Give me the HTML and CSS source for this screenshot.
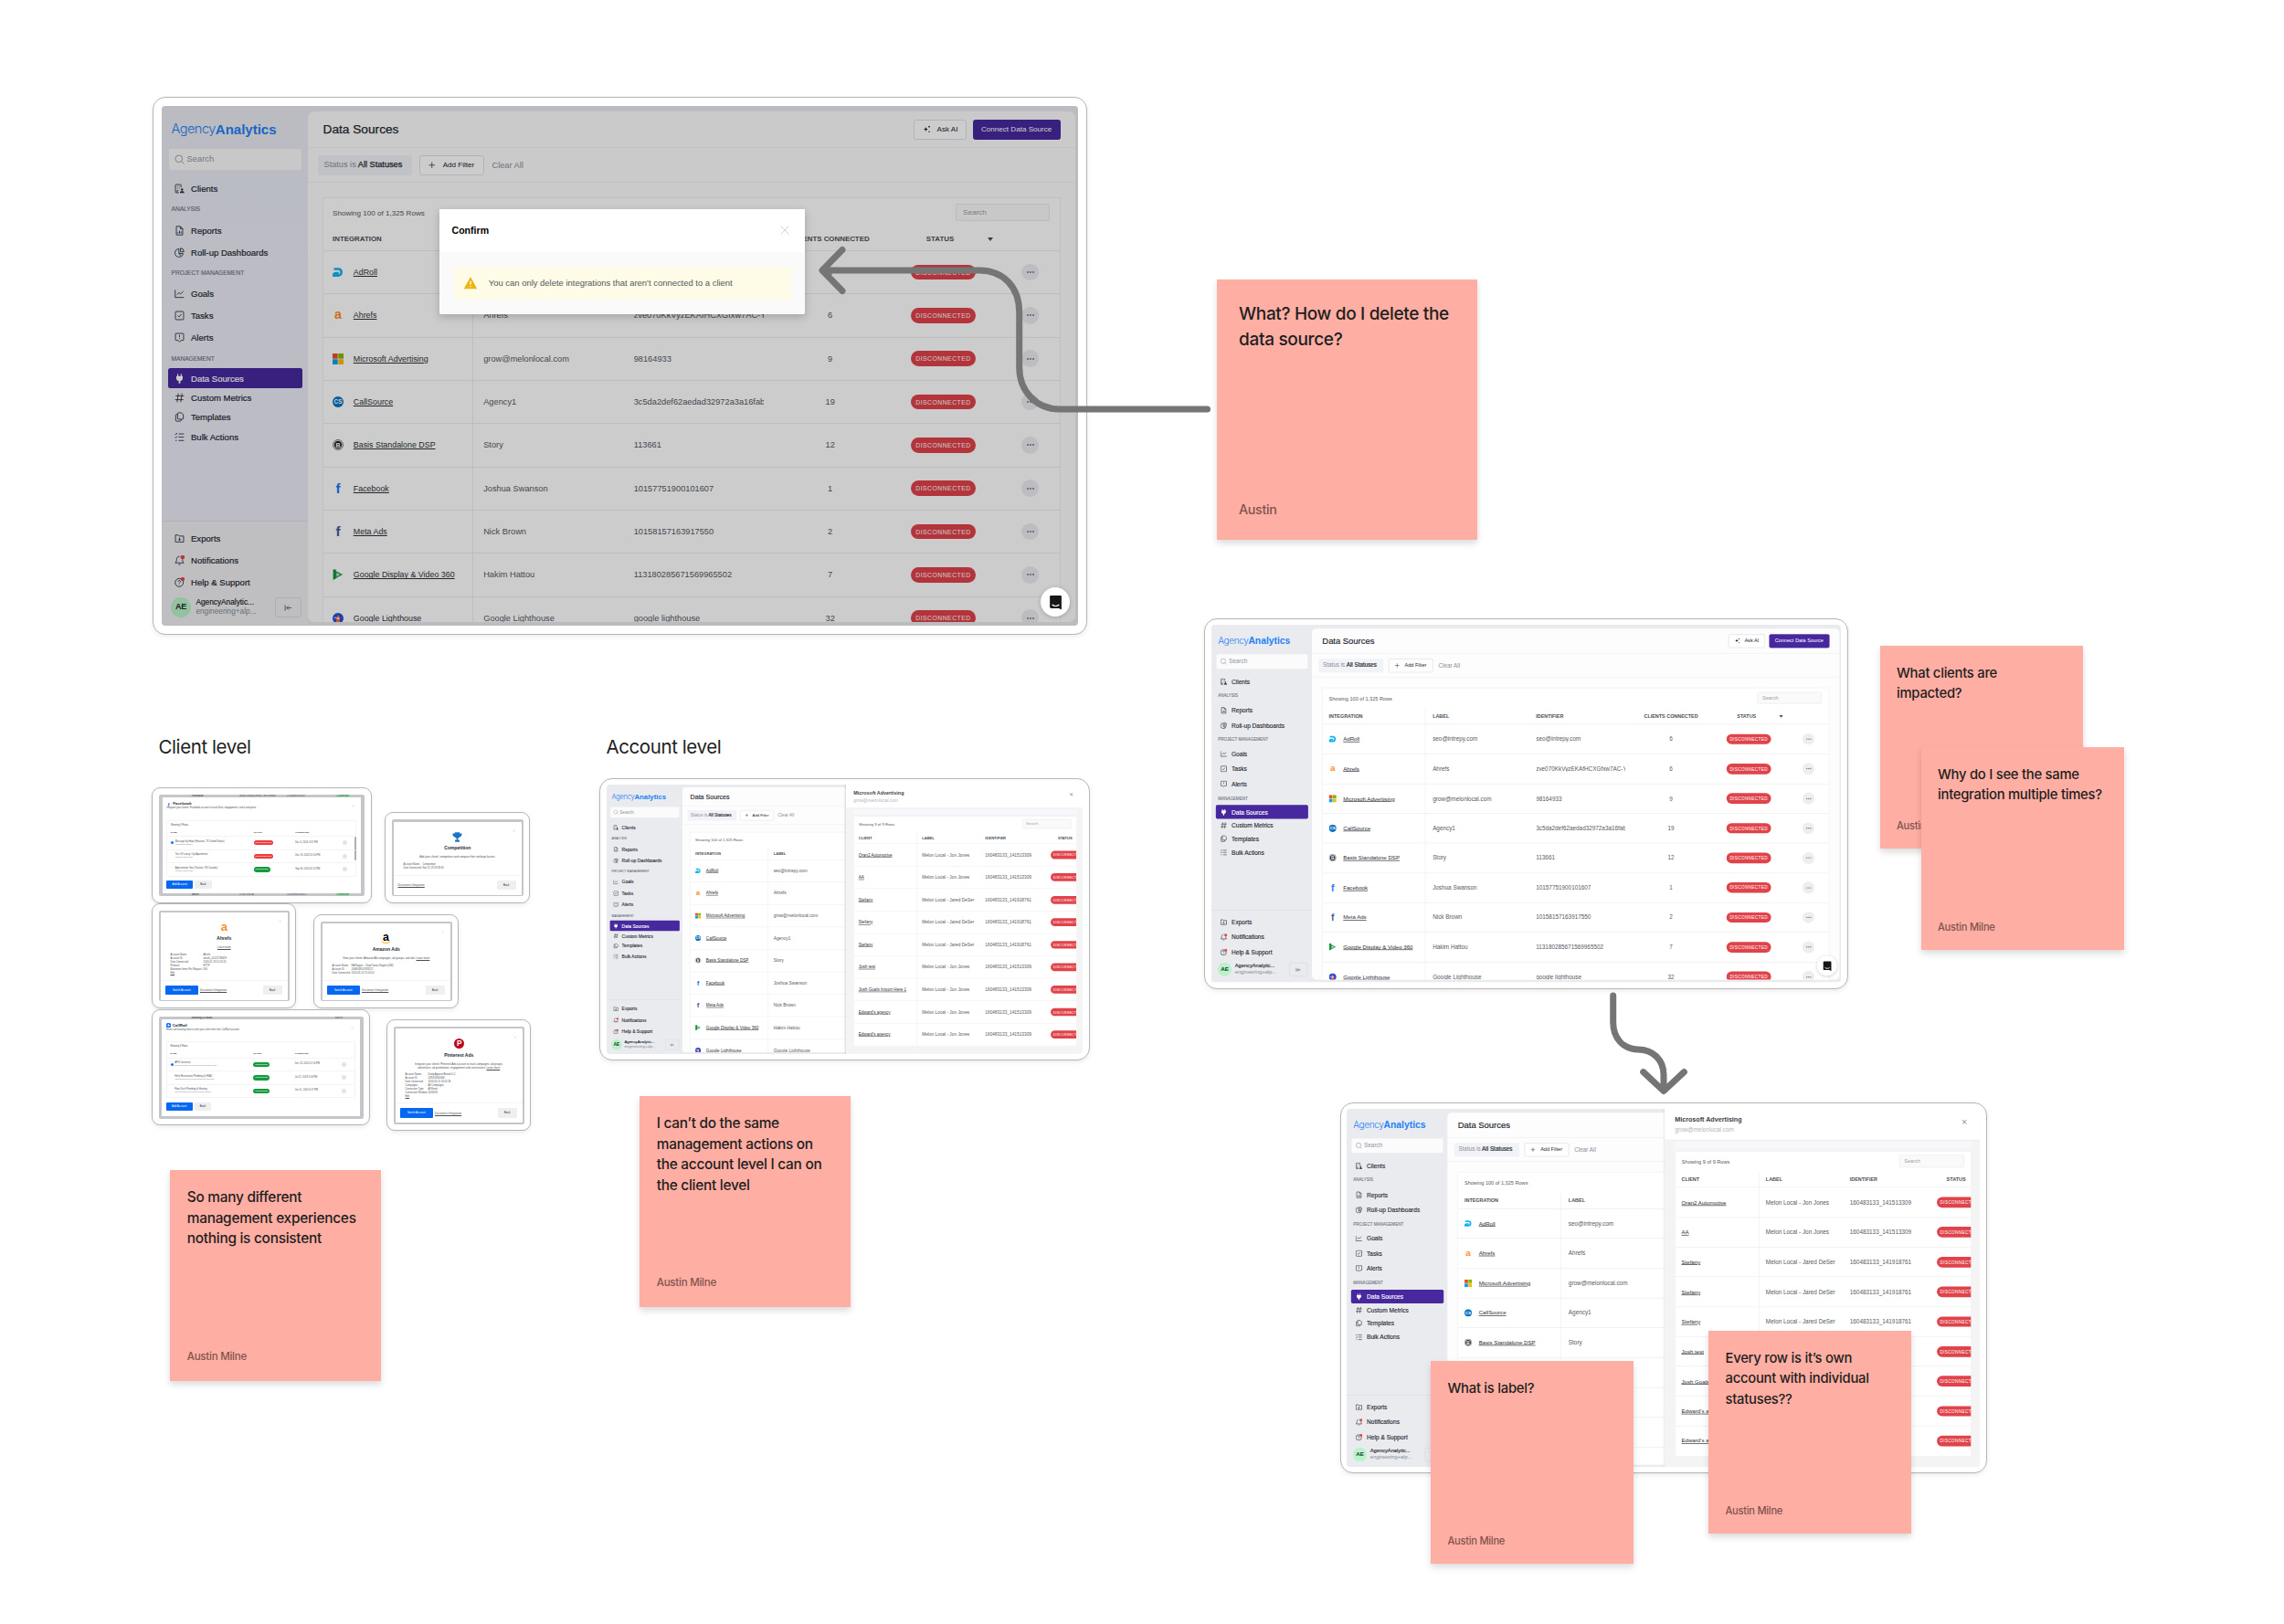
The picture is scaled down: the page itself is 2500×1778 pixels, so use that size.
FILE: index.html
```html
<!DOCTYPE html>
<html lang="en">
  <head>
    <meta charset="UTF-8" />
    <meta name="viewport" content="width=device-width, initial-scale=1.0" />
    <title>Data Sources Audit</title>
    <link rel="stylesheet" href="styles.css">
  </head>
  <body>
    <svg class="sprite" aria-hidden="true">
      <!-- navigation -->
      <symbol id="i-search" viewBox="0 0 16 16"><circle cx="7" cy="7" r="5.6" /><path d="M11.2 11.2 15 15" /></symbol>
      <symbol id="i-clients" viewBox="0 0 16 16"><path d="M7 14.5H2.5a1 1 0 0 1-1-1v-11a1 1 0 0 1 1-1h7a1 1 0 0 1 1 1V6M4.2 4.5h1M7 4.5h1M4.2 7.5h1M7 7.5h1M4.2 14v-3h2" /><circle class="solid" cx="12" cy="9.5" r="1.7" /><path class="solid" d="M8.6 15c0-2.4 1.4-3 3.4-3s3.6.6 3.6 3z" /></symbol>
      <symbol id="i-reports" viewBox="0 0 16 16"><path d="M3 1.2h6.5L13 4.8v10H3zM9.3 1.5V5H13M5.6 12.5v-2M8 12.5V8M10.4 12.5v-3" /></symbol>
      <symbol id="i-pie" viewBox="0 0 16 16"><path d="M7 2.2A6.4 6.4 0 1 0 13.6 9.5H7zM9.5 1A5.8 5.8 0 0 1 15 6.8H9.5zM7 9.5l4 4.3" /></symbol>
      <symbol id="i-goals" viewBox="0 0 16 16"><path d="M1 2v12h14M3.8 9.5 7 6.5l2.5 2 4.5-4" /></symbol>
      <symbol id="i-tasks" viewBox="0 0 16 16"><rect x="1.5" y="1.5" width="13" height="13" rx="1.5" /><path d="m5 8.2 2.2 2L11 5.5" /></symbol>
      <symbol id="i-alerts" viewBox="0 0 16 16"><path d="M2.5 1.5h11a1 1 0 0 1 1 1v9a1 1 0 0 1-1 1h-3L8 15l-2.5-2.5h-3a1 1 0 0 1-1-1v-9a1 1 0 0 1 1-1zM8 4v3.6M8 9.2v1.2" /></symbol>
      <symbol id="i-plug" viewBox="0 0 16 16"><path class="solid" d="M4.5.5h1.6V4h3.8V.5h1.6V4h1.6v3.5c0 2.3-1.6 3.8-3.8 4.2V15.5H6.7v-3.8c-2.2-.4-3.8-1.9-3.8-4.2V4h1.6z" /></symbol>
      <symbol id="i-hash" viewBox="0 0 16 16"><path d="M6.2 1 4 15M12 1 9.8 15M2 5h13M1 11h13" /></symbol>
      <symbol id="i-copy" viewBox="0 0 16 16"><path d="M6 1.3h5l3 3V10.5a1 1 0 0 1-1 1H6a1 1 0 0 1-1-1V2.3a1 1 0 0 1 1-1zM5 4H3a1 1 0 0 0-1 1v8.7a1 1 0 0 0 1 1h6.5a1 1 0 0 0 1-1v-2" /></symbol>
      <symbol id="i-bulk" viewBox="0 0 16 16"><path d="m.8 2.8 1.3 1.3L4.2 1.5M.8 8l1.3 1.3 2.1-2.6M1.5 13.5h2M6.5 3H15M6.5 8H15M6.5 13.5H15" /></symbol>
      <symbol id="i-exports" viewBox="0 0 16 16"><path d="M1.5 2.5H6l1.5 1.7h7v9.5h-13zM8 6.5v5M5.8 9.3 8 11.5l2.2-2.2" /></symbol>
      <symbol id="i-bell" viewBox="0 0 16 16"><path d="M8 1.8c-3 0-4.6 2-4.6 4.7 0 3-1 4.3-2.2 5.5h13.6c-1.2-1.2-2.2-2.5-2.2-5.5M6.3 14.2c.8 1 2.6 1 3.4 0" /><circle class="dot" cx="12.8" cy="3" r="3.4" /></symbol>
      <symbol id="i-help" viewBox="0 0 16 16"><circle cx="7.5" cy="8.5" r="6.5" /><path d="M5.6 6.8c.2-2.6 4-2.2 3.8.2-.2 1.4-1.9 1.3-1.9 2.8M7.5 11.3v1" /><circle class="dot" cx="13" cy="3" r="3.2" /></symbol>
      <symbol id="i-collapse" viewBox="0 0 16 16"><path d="M2 2.5v11M14.5 8H5.5M9 4 5 8l4 4" /></symbol>
      <symbol id="i-spark" viewBox="0 0 16 16"><path class="solid" d="M6 3c.7 3.5 1.5 4.3 5 5-3.5.7-4.3 1.5-5 5-.7-3.5-1.5-4.3-5-5 3.5-.7 4.3-1.5 5-5z" /><circle class="solid" cx="12.5" cy="3" r="1.6" /><circle class="solid" cx="12.5" cy="13" r="1.3" /></symbol>
      <symbol id="i-plus" viewBox="0 0 16 16"><path d="M8 1v14M1 8h14" /></symbol>
      <symbol id="i-close" viewBox="0 0 16 16"><path d="m1 1 14 14M15 1 1 15" /></symbol>
      <symbol id="i-warn" viewBox="0 0 16 16"><path d="M8 1.5 15.3 14.5H.7z" fill="#eeb211" stroke="#eeb211" stroke-linejoin="round" /><path d="M8 5.5v4.3M8 11.5v1.4" stroke="#fff" stroke-width="1.5" /></symbol>
      <symbol id="i-chat" viewBox="0 0 16 16"><path class="solid" d="M3.2 1h9.6c.7 0 1.2.5 1.2 1.2V15.5l-2.6-1.5H3.2A1.2 1.2 0 0 1 2 12.8V2.2C2 1.5 2.5 1 3.2 1z" /><path d="M4.4 10.3c2 1.7 5.2 1.7 7.2 0" stroke="#fff" /></symbol>

      <!-- integrations -->
      <symbol id="l-adroll" viewBox="0 0 16 16"><path d="M2 3.2H9a4.9 4.9 0 0 1 0 9.6H1.500C1.500 10.500 3 9.200 5 9.200H9" fill="none" stroke="#14b4f0" stroke-width="3.4" /></symbol>
      <symbol id="l-ahrefs" viewBox="0 0 16 16"><text x="8" y="13.5" font-size="19" fill="#ff8b1f">a</text></symbol>
      <symbol id="l-microsoft" viewBox="0 0 16 16"><path fill="#f25022" d="M0 0h7.6v7.6H0z" /><path fill="#7fba00" d="M8.4 0H16v7.6H8.4z" /><path fill="#00a4ef" d="M0 8.4h7.6V16H0z" /><path fill="#ffb900" d="M8.4 8.4H16V16H8.4z" /></symbol>
      <symbol id="l-callsource" viewBox="0 0 16 16"><circle cx="8" cy="8" r="8" fill="#0b74c4" /><text x="8" y="11" font-size="8.5" fill="#fff">CS</text></symbol>
      <symbol id="l-basis" viewBox="0 0 16 16"><circle cx="8" cy="8" r="7.3" fill="none" stroke="#444" stroke-width="1" /><circle cx="8" cy="8" r="5.6" fill="#222" /><text x="8" y="11.4" font-size="9.5" fill="#fff">B</text></symbol>
      <symbol id="l-facebook" viewBox="0 0 16 16"><text x="8" y="15" font-size="20" fill="#1777f2">f</text></symbol>
      <symbol id="l-meta" viewBox="0 0 16 16"><text x="8" y="15" font-size="20" fill="#3b5998">f</text></symbol>
      <symbol id="l-dv360" viewBox="0 0 16 16"><path fill="#34a853" d="M1 .5 15 8 1 15.5z" /><path fill="#1e8e3e" d="M1 .5h4v13L1 15.5z" /><path fill="#d9f2df" d="M6 5.5 10.5 8 6 10.5z" /></symbol>
      <symbol id="l-lighthouse" viewBox="0 0 16 16"><circle cx="8" cy="8" r="8" fill="#2b4fd8" /><path fill="#ff6d3b" d="M5 16 6 6l2-3 2 3 1 10z" /><path fill="#fff" d="M6 7h4v2H6zM1.5 7 5 6v2z" /></symbol>
      <symbol id="l-trophy" viewBox="0 0 16 16"><path fill="#1f74c4" d="M4 .5h8V2h3.5c0 3.5-1.5 5.5-4 6-.7 1.2-1.5 1.7-2.5 2v2.5h2.5V15.5h-7V12.5H7V10c-1-.3-1.8-.8-2.5-2-2.5-.5-4-2.500-4-6H4z" /></symbol>
      <symbol id="l-amazon" viewBox="0 0 16 16"><text x="8" y="11.5" font-size="18" fill="#000">a</text><path d="M1 12.5c4 3.4 10 3.4 13.5.3" fill="none" stroke="#ff9900" stroke-width="1.4" /></symbol>
      <symbol id="l-callrail" viewBox="0 0 16 16"><rect width="16" height="16" rx="5" fill="#0f6fff" /><path d="M8 3v10M3 8h10" stroke="#fff" stroke-width="2" /></symbol>
      <symbol id="l-pinterest" viewBox="0 0 16 16"><circle cx="8" cy="8" r="8" fill="#bd081c" /><text x="8.2" y="12.3" font-size="12" fill="#fff">P</text></symbol>
    </svg>

    <main class="board">
      <h2 class="board-title title-client">Client level</h2>
      <h2 class="board-title title-account">Account level</h2>

      <section class="frame frame-confirm"><div class="screen" data-app="confirm"></div></section>
      <section class="frame frame-list"><div class="screen" data-app="list"></div></section>
      <section class="frame frame-account"><div class="screen" data-app="panel"></div></section>
      <section class="frame frame-detail"><div class="screen" data-app="panel"></div></section>

      <section class="frame small card-facebook"><div class="screen" data-list="facebook"></div></section>
      <section class="frame small card-competition"><div class="screen" data-card="competition"></div></section>
      <section class="frame small card-ahrefs"><div class="screen" data-card="ahrefs"></div></section>
      <section class="frame small card-amazon"><div class="screen" data-card="amazon"></div></section>
      <section class="frame small card-callrail"><div class="screen" data-list="callrail"></div></section>
      <section class="frame small card-pinterest"><div class="screen" data-card="pinterest"></div></section>

      <svg class="arrows" viewBox="0 0 2500 1778">
        <path d="M1321.5 448H1160C1134 448 1115.7 428 1115.7 402V342C1115.7 314 1098 296 1072 296H901M922 273.5 900 296 922 318.5" />
        <path d="M1765.7 1090V1119C1765.7 1137 1777 1149 1793 1149C1809 1149 1821 1160 1821 1177V1193M1798.7 1173.6 1821 1194.5 1843.4 1173.6" />
      </svg>

      <article class="note note-delete"><p>What? How do I delete the data source?</p><footer>Austin</footer></article>
      <article class="note note-clients"><p>What clients are<br>impacted?</p><footer>Austin Milne</footer></article>
      <article class="note note-multiple"><p>Why do I see the same integration multiple times?</p><footer>Austin Milne</footer></article>
      <article class="note medium note-consistent"><p>So many different management experiences nothing is consistent</p><footer>Austin Milne</footer></article>
      <article class="note medium note-actions"><p>I can’t do the same management actions on the account level I can on the client level</p><footer>Austin Milne</footer></article>
      <article class="note note-label"><p>What is label?</p><footer>Austin Milne</footer></article>
      <article class="note note-row"><p>Every row is it’s own account with individual statuses??</p><footer>Austin Milne</footer></article>
    </main>

    <script>
      const icon = (id, cls = "icon") => `<svg class="${cls}"><use href="#${id}"></use></svg>`;

      const integrations = [
        ["adroll", "AdRoll", "seo@intrepy.com", "seo@intrepy.com", 6],
        ["ahrefs", "Ahrefs", "Ahrefs", "zve070KkVyzEKAfHCXGfxw7AC-Y", 6],
        ["microsoft", "Microsoft Advertising", "grow@melonlocal.com", "98164933", 9],
        ["callsource", "CallSource", "Agency1", "3c5da2def62aedad32972a3a16fab", 19],
        ["basis", "Basis Standalone DSP", "Story", "113661", 12],
        ["facebook", "Facebook", "Joshua Swanson", "10157751900101607", 1],
        ["meta", "Meta Ads", "Nick Brown", "10158157163917550", 2],
        ["dv360", "Google Display &amp; Video 360", "Hakim Hattou", "113180285671569965502", 7],
        ["lighthouse", "Google Lighthouse", "Google Lighthouse", "google lighthouse", 32],
      ];

      const clients = [
        ["Oran2 Automotive", "Melon Local - Jon Jones", "160483133_141513309"],
        ["AA", "Melon Local - Jon Jones", "160483133_141513309"],
        ["Stefany", "Melon Local - Jared DeSer", "160483133_141918761"],
        ["Stefany", "Melon Local - Jared DeSer", "160483133_141918761"],
        ["Stefany", "Melon Local - Jared DeSer", "160483133_141918761"],
        ["Josh test", "Melon Local - Jon Jones", "160483133_141513309"],
        ["Josh Goals Import Here 1", "Melon Local - Jon Jones", "160483133_141513309"],
        ["Edward's agency", "Melon Local - Jon Jones", "160483133_141513309"],
        ["Edward's agency", "Melon Local - Jon Jones", "160483133_141513309"],
      ];

      const nav = (id, text, cls = "") => `<a class="nav-item ${cls}">${icon(id)}${text}</a>`;

      const sidebar = `
        <aside class="sidebar">
          <div class="logo"><span>Agency</span><b>Analytics</b></div>
          <div class="side-search">${icon("i-search")}Search</div>
          ${nav("i-clients", "Clients")}
          <h6>ANALYSIS</h6>
          ${nav("i-reports", "Reports")}${nav("i-pie", "Roll-up Dashboards")}
          <h6>PROJECT MANAGEMENT</h6>
          ${nav("i-goals", "Goals")}${nav("i-tasks", "Tasks")}${nav("i-alerts", "Alerts")}
          <h6>MANAGEMENT</h6>
          ${nav("i-plug", "Data Sources", "tight active")}${nav("i-hash", "Custom Metrics", "tight")}
          ${nav("i-copy", "Templates", "tight")}${nav("i-bulk", "Bulk Actions", "tight")}
          <div class="side-footer">
            ${nav("i-exports", "Exports")}${nav("i-bell", "Notifications")}${nav("i-help", "Help &amp; Support")}
            <div class="user">
              <div class="avatar">AE</div>
              <div class="user-text"><b>AgencyAnalytic...</b><span>engineering+alp...</span></div>
              <div class="collapse">${icon("i-collapse")}</div>
            </div>
          </div>
        </aside>`;

      const mainRows = integrations.map(([logo, name, label, id, count]) => `
        <div class="row">
          <div class="cell name">${icon("l-" + logo, "logo-icon")}<u>${name}</u></div>
          <div class="cell">${label}</div>
          <div class="cell"><span class="clip">${id}</span></div>
          <div class="cell center">${count}</div>
          <div class="cell center"><span class="pill">DISCONNECTED</span></div>
          <div class="cell center"><span class="more"><i></i><i></i><i></i></span></div>
        </div>`).join("");

      const mainPane = `
        <div class="pane">
          <header class="pane-header">
            <h1>Data Sources</h1>
            <div class="btn ask">${icon("i-spark")}Ask AI</div>
            <div class="btn primary">Connect Data Source</div>
          </header>
          <div class="filters">
            <div class="chip">Status is <b>All Statuses</b></div>
            <div class="btn">${icon("i-plus")}Add Filter</div>
            <span>Clear All</span>
          </div>
          <div class="table">
            <div class="table-top">Showing 100 of 1,325 Rows<div class="table-search">Search</div></div>
            <div class="row head">
              <div class="cell">INTEGRATION</div><div class="cell">LABEL</div><div class="cell">IDENTIFIER</div>
              <div class="cell center">CLIENTS CONNECTED</div>
              <div class="cell sort">STATUS<i class="caret"></i></div><div class="cell"></div>
            </div>
            ${mainRows}
          </div>
        </div>`;

      const panel = `
        <div class="panel">
          <header><h3>Microsoft Advertising</h3><span>grow@melonlocal.com</span>${icon("i-close")}</header>
          <div class="band"></div>
          <div class="table">
            <div class="table-top">Showing 9 of 9 Rows<div class="table-search">Search</div></div>
            <div class="row head">
              <div class="cell">CLIENT</div><div class="cell">LABEL</div><div class="cell">IDENTIFIER</div><div class="cell">STATUS</div>
            </div>
            ${clients.map(([name, label, id]) => `
              <div class="row">
                <div class="cell"><u>${name}</u></div><div class="cell">${label}</div><div class="cell">${id}</div>
                <div class="cell"><span class="pill">DISCONNECTED</span></div>
              </div>`).join("")}
          </div>
        </div>`;

      const confirmModal = `
        <div class="overlay"></div>
        <div class="modal">
          <header>Confirm${icon("i-close")}</header>
          <div class="modal-body"><div class="warning">${icon("i-warn")}You can only delete integrations that aren't connected to a client</div></div>
        </div>`;

      const chat = `<div class="chat">${icon("i-chat")}</div>`;

      document.querySelectorAll("[data-app]").forEach((el) => {
        const type = el.dataset.app;
        el.innerHTML = `<div class="app app-${type}">${sidebar}${mainPane}${
          type === "panel" ? panel : type === "confirm" ? confirmModal + chat : chat
        }</div>`;
      });

      // integration dialogs with a list of accounts
      const lists = {
        facebook: {
          title: "Facebook",
          text: "Integrate your clients' Facebook account to track likes, engagement, reach and posts.",
          behind: ["Facebook", "Grow Locally Dental - HR Growth", "1234838292839", "Mailer", "22302 8GCA", "1c2a9f3d7a2e4c1"],
          rows: [
            ["Massage by Hope (Houston, TX United States)", "103938239028201", "DISCONNECTED", "Dec 3, 2024 4:52 PM"],
            ["Test Of Luxury City Apartments", "102291920171038", "DISCONNECTED", "Dec 19, 2024 10:16 PM"],
            ["Approximate Geo (Toronto, ON Canada)", "101839420184738", "CONNECTED", "Sep 30, 2024 01:11 PM"],
          ],
        },
        callrail: {
          title: "CallRail",
          text: "Share call tracking metrics with your client from their CallRail account.",
          behind: ["Showing 31 Rows", "", ""],
          rows: [
            ["APG Converse", "229fa0c8ca8e4504cb9ff9fa07c0ed5be06f080", "CONNECTED", "Dec 18, 2024 12:14 PM"],
            ["Helix Restoration Plumbing &amp; HVAC", "129ba3cdbee1c0ea0f7908364ba09ba05ce", "CONNECTED", "Jul 21, 2023 5:03 PM"],
            ["Flow-Tech Plumbing &amp; Heating", "1c0dea0b2a0aef4f0f58e90a7de7cadaf", "CONNECTED", "Jan 11, 2024 6:17 PM"],
          ],
        },
      };

      document.querySelectorAll("[data-list]").forEach((el) => {
        const d = lists[el.dataset.list];
        const strip = (t) => `<div class="behind"><b>${t[0]}</b><span>${t[1]}</span><span>${t[2]}</span>${t[1] ? "<em>Connected</em>" : "<span>Search</span>"}</div>`;
        el.innerHTML = `${strip(d.behind)}
          <div class="dialog list">
            ${icon("i-close", "x")}
            <h4>${icon("l-" + el.dataset.list, "logo-icon")}${d.title}</h4>
            <p>${d.text}</p>
            <div class="mini">
              <div class="mini-top">Showing 3 Rows</div>
              <div class="mini-row mini-head"><b>NAME</b><b>STATUS</b><b>CONNECTED</b></div>
              ${d.rows.map(([name, id, status, date], i) => `
                <div class="mini-row">
                  <div class="acct ${i ? "" : "on"}">${name}<small>${id}</small></div>
                  <span class="tag ${status.toLowerCase()}">${status}</span><span>${date}</span><i class="knob"></i>
                </div>`).join("")}
            </div>
            <div class="dialog-actions"><span class="b blue">Add Account</span><span class="b">Back</span></div>
          </div>
          ${d.behind[3] ? strip(d.behind.slice(3)) : '<div class="behind"></div>'}`;
      });

      // single account dialogs
      const cards = {
        competition: {
          title: "Competition", logo: "trophy",
          text: "Add your clients' competitors and compare their rankings factors.",
          details: [["Account Name", "Competition"], ["Date Connected", "Nov 11 19 23:58:45"]],
        },
        ahrefs: {
          title: "Ahrefs", logo: "ahrefs", button: true, text: "<u>Learn more</u>",
          details: [["Account Name", "Ahrefs"], ["Account ID", "ahrefs_02122738429"], ["Date Connected", "2024-01-23 01:25:05"], ["Protocol", "HTTP"], ["Maximum Items Per Request", "500"], ["<u>Edit</u>", ""]],
        },
        amazon: {
          title: "Amazon Ads", logo: "amazon", button: true,
          text: "View your clients' Amazon Ad campaigns, ad groups, and ads. <u>Learn more</u>",
          details: [["Account Name", "NA Region - Chad Toews Nagels (DM)"], ["Account ID", "1068508101933217"], ["Date Connected", "2024-03-14 15:24:02"]],
        },
        pinterest: {
          title: "Pinterest Ads", logo: "pinterest", button: true,
          text: "Integrate your clients' Pinterest Ads account to track campaigns, ad groups, advertisers, ad promotions, engagement and conversions. <u>Learn more</u>",
          details: [["Account Name", "Dixby Apparel Brand LLC"], ["Account ID", "549020900468"], ["Date Connected", "2024-03-11 20:02:28"], ["Campaigns", "All Campaigns"], ["Conversion Type", "All Event"], ["Conversion Window", "30/30/30"], ["<u>Edit</u>", ""]],
        },
      };

      document.querySelectorAll("[data-card]").forEach((el) => {
        const d = cards[el.dataset.card];
        el.innerHTML = `
          <div class="dialog single">
            ${icon("i-close", "x")}
            ${icon("l-" + d.logo, "logo-icon")}
            <h4>${d.title}</h4>
            <p>${d.text}</p>
            <dl>${d.details.map(([k, v]) => `<dt>${k}</dt><dd>${v}</dd>`).join("")}</dl>
            <div class="dialog-footer">${d.button ? '<span class="b blue">Switch Account</span>' : ""}<u>Disconnect Integration</u><span class="b">Back</span></div>
          </div>`;
      });
    </script>
  </body>
</html>
```

FILE: styles.css
```css
* {
  box-sizing: border-box;
}
body {
  margin: 0;
  background: #fff;
  font-family: "Liberation Sans", Arial, sans-serif;
  color: #1e1e1e;
}
h1,
h2,
h3,
h4,
h6,
p,
dl,
dd {
  margin: 0;
}
.sprite {
  display: none;
}
svg {
  flex: none;
  overflow: visible;
}
.icon,
.x {
  width: 11px;
  height: 11px;
  fill: none;
  stroke: currentColor;
  stroke-width: 1.2;
}
.solid {
  fill: currentColor;
  stroke: none;
}
.dot {
  fill: #e5484d;
  stroke: none;
}
symbol text {
  font-family: "Liberation Sans", Arial, sans-serif;
  font-weight: bold;
  text-anchor: middle;
}

/* canvas */
.board {
  position: relative;
  width: 2500px;
  height: 1778px;
  overflow: hidden;
}
.board-title {
  position: absolute;
  top: 805px;
  font: 400 20.5px/26px Inter, sans-serif;
  letter-spacing: -0.02em;
  white-space: nowrap;
}
.title-client {
  left: 173.5px;
}
.title-account {
  left: 663.5px;
}
.arrows {
  position: absolute;
  inset: 0;
  width: 2500px;
  height: 1778px;
  fill: none;
  stroke: #757575;
  stroke-width: 7;
  stroke-linecap: round;
  stroke-linejoin: round;
}
.frame {
  position: absolute;
  background: #fff;
  border: 1px solid #b5b5b5;
  border-radius: 14px;
  box-shadow: 0 2px 5px rgba(0, 0, 0, 0.08);
}
.screen {
  position: relative;
  width: 100%;
  height: 100%;
  overflow: hidden;
  border-radius: 4px;
}
.frame-confirm {
  --scale: 1;
  left: 167px;
  top: 106px;
  width: 1023px;
  height: 589px;
  padding: 9px;
}
.frame-list {
  --scale: 0.6875;
  left: 1318px;
  top: 677px;
  width: 705px;
  height: 406px;
  padding: 6px 7px;
}
.frame-account {
  --scale: 0.5187;
  left: 656px;
  top: 852px;
  width: 537px;
  height: 309px;
  padding: 6px 7px;
}
.frame-detail {
  --scale: 0.6895;
  left: 1467px;
  top: 1207px;
  width: 708px;
  height: 406px;
  padding: 6px;
}

/* app */
.app {
  position: relative;
  display: flex;
  width: 1005px;
  height: 569px;
  background: #e9ebef;
  color: #3c4148;
  font-size: 9.25px;
  transform: scale(var(--scale));
  transform-origin: 0 0;
}
.app-confirm {
  width: 1003px;
}
.sidebar {
  display: flex;
  flex-direction: column;
  width: 160px;
  height: 568px;
  flex: none;
  color: #23272f;
}
.app-confirm .sidebar {
  background: linear-gradient(#e9ebf3, #ebebf8 450px, #efeff3 455px);
}
.logo {
  display: flex;
  align-items: center;
  height: 30px;
  margin: 10px 0 7px 10.5px;
  color: #1f80f5;
  line-height: 1;
}
.logo span {
  font-family: Inter, sans-serif;
  font-weight: 300;
  font-size: 14.6px;
  letter-spacing: -0.55px;
}
.logo b {
  font-size: 15px;
}
.side-search {
  display: flex;
  align-items: center;
  gap: 3px;
  width: 145.5px;
  height: 22.8px;
  margin: 0 0 8.6px 7.6px;
  padding-left: 6px;
  border-radius: 2px;
  background: #fbfbfc;
  color: #8f939d;
  font-size: 9.3px;
}
.nav-item {
  display: flex;
  align-items: center;
  gap: 7.5px;
  width: 147px;
  height: 24px;
  margin-left: 6.5px;
  padding-left: 7px;
  border-radius: 2.5px;
  font-size: 9.55px;
  white-space: nowrap;
  -webkit-text-stroke: 0.18px;
}
.tight {
  height: 21.35px;
}
.active {
  background: #47289f;
  color: #fff;
}
.sidebar h6 {
  height: 22.2px;
  padding-left: 10.5px;
  font-size: 6.6px;
  font-weight: 400;
  line-height: 22px;
  color: #6b717c;
  -webkit-text-stroke: 0.12px;
}
.sidebar h6 + .nav-item {
  margin-top: -0.5px;
}
.side-footer {
  margin-top: auto;
  height: 114px;
  padding-top: 6.5px;
  border-top: 1px solid #dcdee4;
}
.user {
  display: flex;
  align-items: center;
  height: 31px;
  padding-left: 10.4px;
}
.avatar {
  width: 21.5px;
  height: 21.5px;
  border-radius: 50%;
  background: #b9f3c9;
  font-size: 9px;
  font-weight: bold;
  line-height: 21.5px;
  text-align: center;
}
.user-text {
  display: flex;
  flex-direction: column;
  width: 87px;
  margin-left: 5.5px;
  font-size: 8.3px;
  line-height: 9.8px;
}
.user-text b {
  font-weight: 400;
  -webkit-text-stroke: 0.18px;
}
.user-text span {
  color: #858a95;
}
.collapse {
  display: flex;
  align-items: center;
  justify-content: center;
  width: 29px;
  height: 21.5px;
  border: 1px solid #d8dae0;
  border-radius: 3px;
}
.collapse .icon {
  width: 9px;
  height: 9px;
}
.pane {
  width: 840px;
  height: 558.4px;
  margin-top: 6.4px;
  overflow: hidden;
  border-radius: 7px;
  background: #fdfdfe;
}
.pane-header {
  display: flex;
  align-items: center;
  gap: 7px;
  height: 39.8px;
  padding: 0 16.5px;
  border-bottom: 1px solid #f0f0f3;
}
h1 {
  margin-right: auto;
  font-size: 13.7px;
  font-weight: 400;
  color: #23272f;
  -webkit-text-stroke: 0.25px;
}
.btn {
  display: flex;
  align-items: center;
  justify-content: center;
  gap: 8px;
  width: 70.5px;
  height: 21.8px;
  border: 1px solid #dfe0e4;
  border-radius: 2.5px;
  background: #fff;
  color: #23272f;
  font-size: 8.1px;
  white-space: nowrap;
}
.btn .icon {
  width: 7.5px;
  height: 7.5px;
  stroke-width: 1.5;
}
.btn.ask {
  width: 57.5px;
  gap: 7px;
}
.btn.ask .icon {
  width: 9px;
  height: 9px;
}
.btn.primary {
  width: 95.7px;
  border-color: #47289f;
  background: #47289f;
  color: #fff;
}
.filters {
  display: flex;
  align-items: center;
  gap: 8px;
  height: 38.3px;
  padding-left: 11px;
  border-bottom: 1px solid #f0f0f3;
  color: #8a8f9a;
  font-size: 9.2px;
}
.filters > span {
  margin-left: 1px;
}
.chip {
  width: 103px;
  height: 21.7px;
  padding-left: 6.5px;
  border-radius: 2.5px;
  background: #f2f3f7;
  line-height: 21.7px;
  white-space: nowrap;
}
.chip b {
  font-weight: 400;
  color: #23272f;
  -webkit-text-stroke: 0.25px;
}
.table {
  width: 808px;
  margin: 16px 0 0 16px;
  border: 1px solid #f0f0f3;
  background: #fff;
}
.table-top {
  display: flex;
  align-items: center;
  justify-content: space-between;
  height: 32.2px;
  padding: 0 11px 0 10px;
  font-size: 8.1px;
  color: #555a62;
}
.table-search {
  width: 103.5px;
  height: 19.6px;
  padding-left: 7.5px;
  margin-top: -2px;
  border: 1px solid #e9eaed;
  border-radius: 2px;
  background: #fafafb;
  color: #9a9da5;
  line-height: 18px;
}
.row {
  display: grid;
  grid-template-columns: 163.5px 164.5px 166px 121.4px 126.2px 1fr;
  height: 47.35px;
  border-top: 1px solid #ededf0;
  color: #565a61;
}
.row.head {
  height: 24.2px;
  border-top: 0;
  font-size: 7.9px;
  font-weight: bold;
  color: #4b4f57;
}
.cell {
  display: flex;
  align-items: center;
  padding-left: 11.7px;
  white-space: nowrap;
}
.cell:first-child {
  padding-left: 10px;
  border-right: 1px solid #ededf0;
}
.cell.center {
  justify-content: center;
  padding-left: 0;
}
.cell.sort {
  gap: 36.5px;
  padding-left: 44.4px;
}
.caret {
  border: 3px solid transparent;
  border-top: 4.5px solid currentColor;
  border-bottom: 0;
}
.cell u {
  color: #2d3138;
  text-decoration-thickness: 0.7px;
  text-underline-offset: 1px;
  font-size: 8.9px;
}
.logo-icon {
  width: 12px;
  height: 12px;
}
.name {
  gap: 10.8px;
}
.clip {
  width: 142.5px;
  overflow: hidden;
}
.pill {
  flex: none;
  width: 70.3px;
  height: 16.8px;
  border-radius: 8.4px;
  background: #e0434a;
  color: #fff;
  font-size: 6.8px;
  letter-spacing: 0.5px;
  line-height: 17px;
  text-align: center;
}
.more {
  display: flex;
  align-items: center;
  justify-content: center;
  gap: 1px;
  width: 18.6px;
  height: 18.6px;
  border-radius: 50%;
  background: #ededf2;
}
.more i {
  width: 2px;
  height: 2px;
  border-radius: 50%;
  background: #70747e;
}
.chat {
  position: absolute;
  right: 9px;
  bottom: 10px;
  display: flex;
  align-items: center;
  justify-content: center;
  width: 32px;
  height: 32px;
  border-radius: 50%;
  background: #fff;
  box-shadow: 0 1px 5px rgba(0, 0, 0, 0.2);
  color: #14161a;
}
.chat .icon {
  width: 17px;
  height: 17px;
}

/* side panel over the list */
.panel {
  position: absolute;
  top: 0;
  right: 0;
  width: 500.5px;
  height: 569px;
  background: #f4f4f5;
  box-shadow: -1px 0 4px rgba(0, 0, 0, 0.18);
}
.panel header {
  position: relative;
  height: 50px;
  padding: 10px 0 0 16.5px;
  border-bottom: 1px solid #e9eaec;
  background: #fff;
}
.panel h3 {
  font-size: 10.4px;
  line-height: 15px;
}
.panel header span {
  display: block;
  line-height: 16px;
  color: #b4b6bb;
}
.panel header .icon {
  position: absolute;
  right: 21px;
  top: 17px;
  width: 7.5px;
  height: 7.5px;
  stroke-width: 2;
}
.band {
  width: 471px;
  height: 11px;
  margin: 2px 0 4px 16.5px;
  background: #f7f8fb;
}
.panel .table {
  width: 471px;
  height: 485px;
  margin: 0 0 0 16.5px;
  overflow: hidden;
}
.panel .row {
  grid-template-columns: 132.7px 133.3px 138.3px 80px;
}
.panel .row .cell {
  padding-left: 10.8px;
}
.panel .row .cell:first-child {
  padding-left: 9.5px;
}
.panel .row.head .cell:last-child {
  padding-left: 26px;
}

/* confirm dialog */
.overlay {
  position: absolute;
  inset: 0;
  background: rgba(0, 0, 0, 0.2);
}
.modal {
  position: absolute;
  left: 303.5px;
  top: 112.7px;
  width: 400.5px;
  height: 115px;
  border-radius: 2px;
  background: #fafafa;
  box-shadow: 0 3px 10px rgba(0, 0, 0, 0.2);
}
.modal header {
  display: flex;
  align-items: center;
  justify-content: space-between;
  height: 47px;
  padding: 0 17px 0 14px;
  background: #fff;
  color: #000;
  font-size: 10.6px;
  font-weight: bold;
}
.modal header .icon {
  width: 10px;
  height: 10px;
  color: #c4c4c8;
}
.modal-body {
  padding: 16.3px 15.5px 0 16.3px;
}
.warning {
  display: flex;
  align-items: center;
  gap: 12.5px;
  height: 35.7px;
  padding-left: 11.5px;
  background: #fefbe6;
  color: #55585e;
  font-size: 9.45px;
}
.warning .icon {
  width: 14px;
  height: 14px;
}

/* small dialogs */
.small {
  border-radius: 9px;
}
.small .screen {
  display: flex;
  flex-direction: column;
  border-radius: 2px;
  background: #c5c6ca;
}
.card-facebook {
  left: 166px;
  top: 862px;
  width: 241px;
  height: 127px;
  padding: 7px;
}
.card-competition {
  left: 421px;
  top: 889px;
  width: 159px;
  height: 100px;
  padding: 7px 6.5px;
}
.card-ahrefs {
  left: 166px;
  top: 989px;
  width: 158px;
  height: 115px;
  padding: 7px 6.5px;
}
.card-amazon {
  left: 343px;
  top: 1001px;
  width: 159px;
  height: 103px;
  padding: 7px 6.5px;
}
.card-callrail {
  left: 166px;
  top: 1105px;
  width: 239px;
  height: 127px;
  padding: 6.5px;
}
.card-pinterest {
  left: 423px;
  top: 1116px;
  width: 158px;
  height: 122px;
  padding: 6.5px;
}
.behind {
  display: grid;
  grid-template-columns: 52px 52px 53px 1fr;
  flex: none;
  height: 3px;
  padding-left: 36px;
  overflow: hidden;
  font-size: 2.7px;
  line-height: 3px;
  white-space: nowrap;
  color: #50545c;
}
.behind em {
  width: 16px;
  background: #9fd3ae;
  color: #27683a;
  font-style: normal;
  text-align: center;
}
.dialog {
  position: relative;
  display: flex;
  flex-direction: column;
  flex: 1;
  background: #fff;
  color: #4a4e56;
  font-size: 2.7px;
  line-height: 4px;
}
.dialog h4 {
  color: #23272f;
  font-size: 4.4px;
  line-height: 6px;
}
.dialog .x {
  position: absolute;
  right: 6.5px;
  top: 8px;
  width: 3.5px;
  height: 3.5px;
  color: #b9bbc2;
}
.list {
  margin: 0 4px 0 3.5px;
  padding: 4px 4.7px 0;
}
.list h4 {
  display: flex;
  align-items: center;
  gap: 2px;
}
.list h4 .logo-icon {
  width: 5px;
  height: 5px;
}
.list p {
  height: 14.5px;
  font-size: 2.62px;
  white-space: nowrap;
}
.mini {
  border: 1px solid #f4f4f6;
  font-size: 2.6px;
}
.mini-top {
  height: 9.5px;
  padding: 3px 0 0 3.5px;
}
.mini-row {
  position: relative;
  display: grid;
  grid-template-columns: 91px 45.5px 51.5px 5px;
  align-items: center;
  height: 14.6px;
  padding-left: 3.5px;
  border-top: 1px solid #f4f4f6;
}
.mini-head {
  height: 7px;
  border-top: 0;
  font-size: 2.4px;
  color: #2d3138;
}
.acct {
  position: relative;
  padding-left: 5px;
  line-height: 3.2px;
  white-space: nowrap;
}
.acct small {
  display: block;
  color: #85888f;
  font-size: 2.3px;
}
.acct.on::before {
  content: "";
  position: absolute;
  left: 0.5px;
  top: 1.5px;
  width: 3px;
  height: 3px;
  border-radius: 50%;
  background: #0f6fff;
}
.tag {
  width: 21.6px;
  height: 5.3px;
  border-radius: 3px;
  background: #ef3b3f;
  color: #fff;
  font-size: 2.2px;
  line-height: 5.3px;
  text-align: center;
}
.tag.connected {
  width: 18px;
  background: #149b3f;
}
.knob {
  width: 5px;
  height: 5px;
  border-radius: 50%;
  background: #e2e4ea;
}
.card-facebook .mini-row:nth-child(3)::after {
  content: "";
  position: absolute;
  right: -0.5px;
  top: 0;
  width: 2px;
  height: 26px;
  border-radius: 1px;
  background: #b0b0b3;
}
.dialog-actions {
  display: flex;
  gap: 2px;
  margin-top: 4.5px;
}
.b {
  width: 21.5px;
  height: 10.5px;
  border-radius: 1px;
  background: #efefef;
  color: #23272f;
  font-size: 2.9px;
  line-height: 10.5px;
  text-align: center;
}
.b.blue {
  width: 36.5px;
  background: #0668f0;
  color: #fff;
}
.list .b {
  width: 18.7px;
  height: 9px;
  line-height: 9px;
}
.list .b.blue {
  width: 29px;
}
.single {
  align-items: center;
  margin: 1.5px 1.5px 1.5px 2px;
  padding-top: 11px;
}
.card-competition .single,
.card-pinterest .single {
  margin-top: 2.5px;
}
.single > .logo-icon {
  width: 11px;
  height: 11px;
}
.single h4 {
  margin: 3.5px 0 5px;
  font-size: 5px;
}
.single p {
  width: 108px;
  text-align: center;
  font-size: 2.9px;
}
.single dl {
  display: grid;
  grid-template-columns: 25px 1fr;
  width: 100%;
  margin-top: 4.5px;
  padding-left: 11px;
  white-space: nowrap;
}
.card-ahrefs dl {
  grid-template-columns: 36px 1fr;
}
.card-competition dl,
.card-amazon dl {
  grid-template-columns: 21px 1fr;
}
.dialog-footer {
  display: flex;
  align-items: center;
  gap: 2px;
  width: 100%;
  height: 22px;
  margin-top: auto;
  padding: 0 6px 0 5px;
  border-top: 1px solid #f4f4f6;
  font-size: 2.95px;
}
.dialog-footer .b:last-child {
  margin-left: auto;
}

/* sticky notes */
.note {
  --unit: 0.925px;
  position: absolute;
  display: flex;
  flex-direction: column;
  justify-content: space-between;
  width: calc(240 * var(--unit));
  height: calc(240 * var(--unit));
  padding: calc(20 * var(--unit)) calc(18 * var(--unit)) calc(19 * var(--unit)) calc(20 * var(--unit));
  background: #ffaea3;
  box-shadow: 0 4px 7px rgba(0, 0, 0, 0.14);
  font-family: Inter, sans-serif;
  font-size: calc(16 * var(--unit));
  font-weight: 500;
  line-height: 22.6px;
  letter-spacing: -0.017em;
}
.note footer {
  font-size: calc(12 * var(--unit));
  line-height: calc(16 * var(--unit));
  color: #80544e;
}
.medium {
  --unit: 0.9625px;
}
.note-delete {
  --unit: 1.1875px;
  left: 1332.3px;
  top: 306px;
  line-height: 28px;
  padding-bottom: 24.5px;
}
.note-clients {
  left: 2057.5px;
  top: 707px;
}
.note-multiple {
  left: 2102.5px;
  top: 818px;
}
.note-consistent {
  left: 185.5px;
  top: 1281px;
}
.note-actions {
  left: 699.5px;
  top: 1200px;
}
.note-label {
  left: 1566px;
  top: 1490px;
}
.note-row {
  left: 1870px;
  top: 1457px;
}
```
